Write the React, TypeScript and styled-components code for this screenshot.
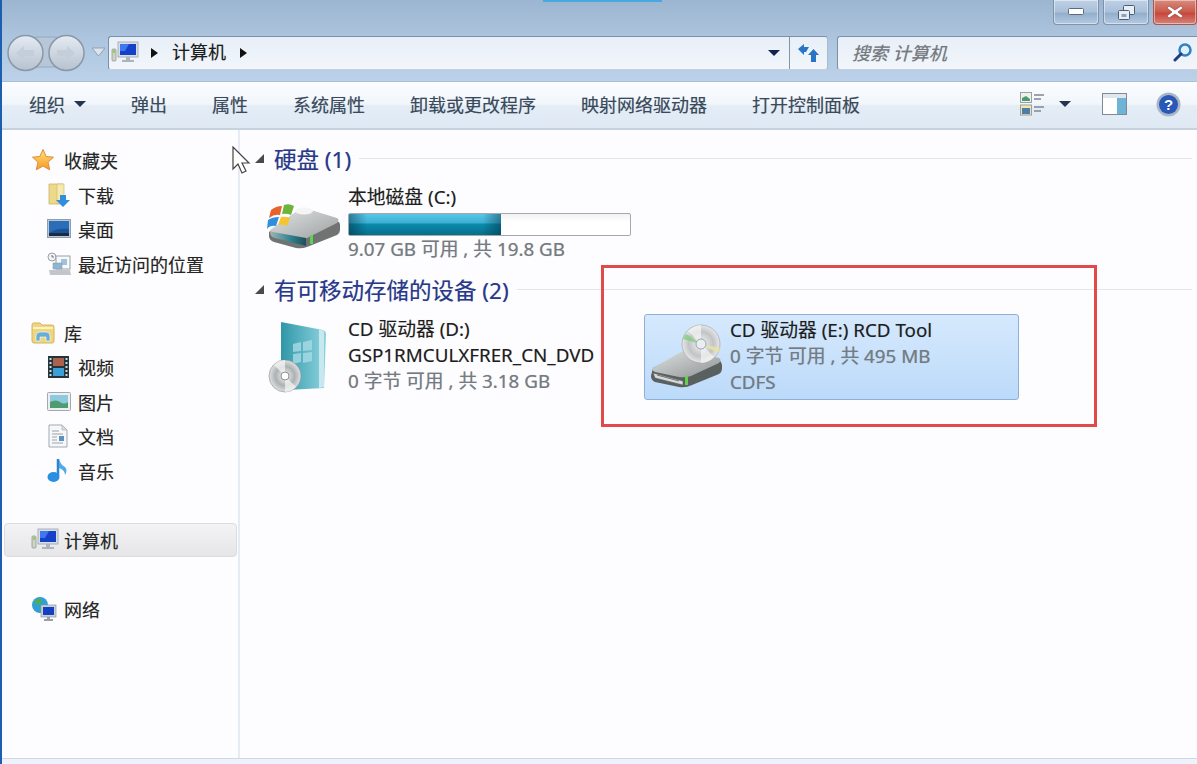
import React from 'react';
import styled, { createGlobalStyle } from 'styled-components';

const GlobalStyle = createGlobalStyle`
    html, body { margin: 0; padding: 0; height: 100%; overflow: hidden; background: #fdfcfe; }
    #root { height: 100%; }
    * { box-sizing: border-box; }
`;

const FONT = `"Noto Sans", "Noto Sans CJK SC", sans-serif`;

const Window = styled.div`
    position: relative;
    display: flex;
    flex-direction: column;
    width: 1197px;
    height: 764px;
    border-left: 2px solid #1d5fae;
    font-family: ${FONT};
    font-size: 18px;
    text-shadow: 0 0 .7px rgba(0, 0, 0, .3);
    background: #fdfcfe;
    overflow: hidden;
`;

const Chrome = styled.div`
    position: relative;
    height: 82px;
    flex: none;
    background: linear-gradient(#9cb5d0 0%, #acc4de 45%, #bcd2ea 100%);
    box-shadow: inset 0 -1px 0 #a9bfd8;
`;

const ActiveStrip = styled.div`
    position: absolute;
    left: 541px;
    top: 0;
    width: 119px;
    height: 2px;
    background: #4aa8e0;
`;

const CaptionRow = styled.div`
    display: flex;
    justify-content: flex-end;
    gap: 4px;
    height: 36px;
`;

const CaptionButton = styled.div<{ $close?: boolean }>`
    display: flex;
    align-items: center;
    justify-content: center;
    width: ${p => (p.$close ? '44px' : '46px')};
    height: 25px;
    border: 1px solid ${p => (p.$close ? '#a8564f' : '#7f93a8')};
    border-top: none;
    border-radius: 0 0 4px 4px;
    background: ${p => p.$close
        ? 'linear-gradient(#d98b7c, #c9594a 50%, #c8453a 55%, #d5847a)'
        : 'linear-gradient(#bed0e4, #a9c0da 50%, #93aecb 55%, #b4cae2)'};
    box-shadow: inset 0 0 0 1px rgba(255, 255, 255, .45);
`;

const AddressRow = styled.div`
    display: flex;
    align-items: center;
    height: 34px;
    padding-left: 5px;
`;

const NavGroup = styled.div`
    width: 101px;
    flex: none;
    display: flex;
`;

const AddressBox = styled.div`
    display: flex;
    align-items: center;
    width: 720px;
    height: 34px;
    flex: none;
    border: 1px solid #7d8fa3;
    border-bottom-color: #c2d0e0;
    border-right-color: #a9bbcf;
    border-radius: 3px;
    background: linear-gradient(#e8eff8, #f2f6fb);
`;

const Crumbs = styled.div`
    flex: 1;
    display: flex;
    align-items: center;
    height: 100%;
    padding-left: 2px;
    color: #1c1c1c;
`;

const CrumbLabel = styled.span`
    margin: 0 14px 4px 14px;
`;

const CrumbArrow = styled.span<{ $left?: number }>`
    display: inline-block;
    margin-left: ${p => p.$left ?? 0}px;
    width: 0;
    height: 0;
    border-top: 5px solid transparent;
    border-bottom: 5px solid transparent;
    border-left: 7px solid #111;
`;

const Caret = styled.span<{ $color?: string; $left?: number }>`
    display: inline-block;
    margin-left: ${p => p.$left ?? 0}px;
    width: 0;
    height: 0;
    border-left: 6px solid transparent;
    border-right: 6px solid transparent;
    border-top: 6px solid ${p => p.$color ?? '#26344f'};
`;

const HistoryCell = styled.div`
    width: 34px;
    height: 100%;
    display: flex;
    align-items: center;
    padding-left: 13px;
`;

const RefreshCell = styled.div`
    width: 38px;
    height: 100%;
    display: flex;
    align-items: center;
    justify-content: center;
    border-left: 1px solid #8494a6;
`;

const SearchBox = styled.div`
    display: flex;
    align-items: center;
    justify-content: space-between;
    margin-left: 9px;
    flex: 1;
    height: 34px;
    padding: 0 4px 2px 14px;
    border: 1px solid #7d8fa3;
    border-bottom-color: #c2d0e0;
    border-right: none;
    border-radius: 3px 0 0 3px;
    background: linear-gradient(#e8eff8, #f2f6fb);
    color: #75797f;
    font-style: italic;
`;

const CommandBar = styled.div`
    display: flex;
    align-items: center;
    flex: none;
    height: 48px;
    padding: 0 16px 2px 27px;
    border-bottom: 2px solid #c7d2df;
    background: linear-gradient(#fbfdff 0%, #f1f6fb 48%, #e4edf6 52%, #dfe9f4 100%);
    color: #3a4a5e;
`;

const CommandList = styled.div`
    display: flex;
    align-items: center;
    gap: 45px;
    flex: 1;
`;

const CommandItem = styled.span`
    display: flex;
    align-items: center;
    white-space: nowrap;
`;

const CommandIcons = styled.div`
    display: flex;
    align-items: center;
`;

const IconSlot = styled.span<{ $left: number }>`
    display: flex;
    margin-left: ${p => p.$left}px;
`;

const Body = styled.div`
    flex: 1;
    display: flex;
    min-height: 0;
`;

const Sidebar = styled.nav`
    width: 238px;
    flex: none;
    display: flex;
    flex-direction: column;
    gap: 34.5px;
    padding: 13px 1px 0 2px;
    border-right: 2px solid #e6ebf5;
    color: #262626;
`;

const NavSection = styled.div`
    display: flex;
    flex-direction: column;
`;

const NavRow = styled.div<{ $child?: boolean; $active?: boolean }>`
    display: flex;
    align-items: center;
    height: 34.5px;
    padding-left: ${p => (p.$child ? '42px' : '26px')};
    white-space: nowrap;
    border-radius: 4px;
    border: 1px solid ${p => (p.$active ? '#dcdcde' : 'transparent')};
    background: ${p => (p.$active ? 'linear-gradient(#f3f2f4, #e6e6e8)' : 'transparent')};
`;

const NavIcon = styled.span<{ $child?: boolean }>`
    display: flex;
    align-items: center;
    flex: none;
    width: ${p => (p.$child ? '31px' : '33px')};
`;

const Content = styled.main`
    flex: 1;
    display: flex;
    flex-direction: column;
    padding: 13px 5px 0 15px;
`;

const GroupHeader = styled.div`
    display: flex;
    align-items: center;
    height: 30px;
    color: #27388f;
    font-size: 22.5px;
    white-space: nowrap;
`;

const GroupArrow = styled.span`
    width: 0;
    height: 0;
    margin-right: 10px;
    border-left: 9px solid transparent;
    border-bottom: 9px solid #4a4a4a;
`;

const GroupLine = styled.span`
    flex: 1;
    height: 1px;
    margin-left: 8px;
    background: #e4e6ea;
`;

const TileGrid = styled.div`
    display: grid;
    grid-template-columns: repeat(2, 375px);
    gap: 7px;
    margin: 9px 0 11px 7px;
`;

const Tile = styled.div<{ $selected?: boolean }>`
    display: flex;
    height: ${p => (p.$selected ? '86px' : 'auto')};
    margin-top: ${p => (p.$selected ? '1px' : '0')};
    border-radius: 3px;
    border: 1px solid ${p => (p.$selected ? '#8fb0d6' : 'transparent')};
    background: ${p => (p.$selected ? 'linear-gradient(#d6e9fd, #bcdafa)' : 'transparent')};
`;

const TileIcon = styled.div`
    width: 85px;
    flex: none;
    display: flex;
    align-items: center;
    padding-left: 4px;
`;

const TileText = styled.div<{ $top?: number }>`
    display: flex;
    flex-direction: column;
    min-width: 0;
    padding-top: ${p => p.$top ?? 2}px;
    font-size: 18.8px;
    line-height: 26px;
    white-space: nowrap;
`;

const TileName = styled.div`
    color: #1e1e1e;
`;

const TileMeta = styled.div`
    color: #757b82;
`;

const SpaceBar = styled.div`
    width: 283px;
    height: 23px;
    margin-top: 3px;
    border: 1px solid #a5a8ad;
    border-radius: 2px;
    background: linear-gradient(#f2f2f2, #fff 40%);
    overflow: hidden;
`;

const SpaceFill = styled.div<{ $used: number }>`
    width: ${p => p.$used}%;
    height: 100%;
    background:
        linear-gradient(90deg, rgba(0, 40, 60, .45), transparent 12%, transparent 88%, rgba(0, 40, 60, .45)),
        linear-gradient(#58c6e6 0%, #3eb0d4 42%, #0a8cab 48%, #066f8c 100%);
`;

const StatusStrip = styled.div`
    flex: none;
    height: 6px;
    border-top: 1px solid #d0d8e6;
    background: #eef3fb;
`;

const Annotation = styled.div`
    position: absolute;
    left: 599px;
    top: 265px;
    width: 496px;
    height: 162px;
    border: 3px solid #e24a4a;
    pointer-events: none;
`;

const Cursor = styled.svg`
    position: absolute;
    left: 229px;
    top: 146px;
`;

const ComputerIcon = () => (
    <svg width="28" height="24" viewBox="0 0 28 24">
        <rect x="1" y="8" width="4" height="12" rx="1" fill="#cfd3c8" stroke="#8a8f86" strokeWidth=".7" />
        <rect x="2" y="9" width="2" height="3" fill="#8fd14f" />
        <rect x="7" y="1" width="20" height="15" fill="#d9dee6" stroke="#9aa3ae" strokeWidth=".8" />
        <rect x="9" y="3" width="16" height="11" fill="#1540c8" />
        <path d="M9 3h9l-4 7H9z" fill="#3f78ee" />
        <path d="M15 16h4v3h-4zM11 19h12v2H11z" fill="#aeb4bb" />
    </svg>
);

const StarIcon = () => (
    <svg width="24" height="24" viewBox="0 0 24 24">
        <defs>
            <linearGradient id="star" x1="0" y1="0" x2="0" y2="1">
                <stop offset="0" stopColor="#ffe27a" />
                <stop offset="1" stopColor="#f79a22" />
            </linearGradient>
        </defs>
        <path d="M12 1.5l3.2 7 7.3.7-5.5 5 1.7 7.6L12 18l-6.700 3.800 1.700-7.600-5.500-5 7.300-.7z" fill="url(#star)" stroke="#e08a3a" strokeWidth="1" />
    </svg>
);

const DownloadIcon = () => (
    <svg width="24" height="26" viewBox="0 0 24 26">
        <path d="M2 2h14v20H2z" fill="#ecd98a" stroke="#c9b569" strokeWidth=".8" />
        <path d="M10 2h7v15l-7 5z" fill="#f6e9ad" stroke="#c9b569" strokeWidth=".6" />
        <path d="M13 13h6v5h4l-7 7-7-7h4z" fill="#2f8fdc" />
    </svg>
);

const DesktopIcon = () => (
    <svg width="24" height="20" viewBox="0 0 24 20">
        <rect x=".5" y=".5" width="23" height="18" fill="#b8c6d8" stroke="#8d9db2" />
        <rect x="2" y="2" width="20" height="15" fill="#16559b" />
        <path d="M2 2h20v8C14 9 8 10 2 14z" fill="#2c6db8" />
        <rect x="2" y="14" width="20" height="3" fill="#1d2b3e" />
    </svg>
);

const RecentIcon = () => (
    <svg width="25" height="24" viewBox="0 0 25 24">
        <circle cx="5" cy="5" r="4" fill="#f3f3f3" stroke="#9aa0a6" />
        <path d="M5 3v2h2" stroke="#6f7680" fill="none" />
        <rect x="9" y="4" width="14" height="13" fill="#f7f9fb" stroke="#9aa0a6" />
        <path d="M14 7h6v6h-6z" fill="#9ec3dd" />
        <rect x="6" y="11" width="9" height="6" fill="#8db6d2" stroke="#8a949c" strokeWidth=".5" />
        <path d="M2 18h21l1 5H3z" fill="#c2c6ca" />
    </svg>
);

const LibraryIcon = () => (
    <svg width="24" height="22" viewBox="0 0 24 22">
        <path d="M1 3q0-2 2-2h6l2 2h10q2 0 2 2v14q0 2-2 2H3q-2 0-2-2z" fill="#f0d57e" stroke="#d2b45f" />
        <path d="M2 6h20" stroke="#fbf3c8" strokeWidth="2" />
        <path d="M5 19v-5q0-4 4-4h6q4 0 4 4v5h-4v-4H9v4z" fill="#67aed8" stroke="#fff" strokeWidth=".6" />
    </svg>
);

const VideoIcon = () => (
    <svg width="23" height="23" viewBox="0 0 23 23">
        <rect width="21" height="22" x="1" fill="#26343a" />
        <path d="M6 2h11v8H6z" fill="#a9634c" />
        <path d="M6 12h11v8H6z" fill="#3d9fd8" />
        <path d="M2.500 2h2v2h-2zm0 4h2v2h-2zm0 4h2v2h-2zm0 4h2v2h-2zm0 4h2v2h-2zM18.500 2h2v2h-2zm0 4h2v2h-2zm0 4h2v2h-2zm0 4h2v2h-2zm0 4h2v2h-2z" fill="#bfe0ea" />
    </svg>
);

const PictureIcon = () => (
    <svg width="24" height="20" viewBox="0 0 24 20">
        <rect x=".5" y=".5" width="23" height="18" rx="1" fill="#eceff2" stroke="#a4a9ae" />
        <rect x="3" y="3" width="18" height="13" fill="#8ec9df" />
        <path d="M3 10q6-3 10 0t8 0v6H3z" fill="#4f9c70" />
    </svg>
);

const DocumentIcon = () => (
    <svg width="22" height="24" viewBox="0 0 22 24">
        <path d="M2 1h13l5 5v17H2z" fill="#f6f7f9" stroke="#a4a9b0" />
        <path d="M15 1v5h5z" fill="#d9dde2" stroke="#a4a9b0" strokeWidth=".6" />
        <path d="M5 7h7M5 10h11M5 13h5M5 16h5M5 19h11" stroke="#9ba4ae" />
        <rect x="12" y="12" width="5" height="5" fill="#5b93bd" />
    </svg>
);

const MusicIcon = () => (
    <svg width="22" height="25" viewBox="0 0 22 25">
        <path d="M11 1v17" stroke="#2a86d2" strokeWidth="2.500" />
        <ellipse cx="6.500" cy="19" rx="6" ry="5" fill="#2a8fe0" />
        <path d="M12 1q1 5 6 8 3 3 0 8 0-5-6-7z" fill="#52a9e8" />
    </svg>
);

const NetworkIcon = () => (
    <svg width="26" height="26" viewBox="0 0 26 26">
        <circle cx="9" cy="9" r="8" fill="#2f9fd6" />
        <path d="M4 4q4-2 7 0l-2 4-4 1zM9 11l5 1-2 4-3-1z" fill="#4fae4a" />
        <rect x="10" y="9" width="15" height="12" fill="#c9d0d8" stroke="#8c97a3" strokeWidth=".7" />
        <rect x="12" y="11" width="11" height="8" fill="#1440c4" />
        <path d="M16 21h3v2h-3zM13 23h9v2h-9z" fill="#98a0a8" />
    </svg>
);

const HardDiskIcon = () => (
    <svg width="74" height="54" viewBox="0 0 74 54">
        <defs>
            <linearGradient id="hddTop" x1="0" y1="0" x2="1" y2="1">
                <stop offset="0" stopColor="#e3e5e5" />
                <stop offset="1" stopColor="#9a9f9f" />
            </linearGradient>
            <linearGradient id="hddFront" x1="0" y1="0" x2="1" y2="0">
                <stop offset="0" stopColor="#9fb4b6" />
                <stop offset=".6" stopColor="#2d7f8c" />
                <stop offset="1" stopColor="#1f4f58" />
            </linearGradient>
        </defs>
        <path d="M2 36 30 18q6-3 14-1l26 8q3 1 3 4v5q0 3-3 5L40 51q-5 2-11 1L7 46q-5-2-5-6z" fill="#6f7473" />
        <path d="M3 34 30 15q6-3 14-1l26 8q3 2 0 5L40 42q-5 2-11 1L6 37q-3-1-3-3z" fill="url(#hddTop)" />
        <ellipse cx="37" cy="15" rx="9" ry="3.500" fill="#f4f5f5" />
        <path d="M3 35q0 6 5 7l31 8v-8L6 36z" fill="url(#hddFront)" />
        <rect x="43" y="39" width="3" height="9" fill="#63d04f" />
        <path d="M4 14q5-4 11-4l-2 9q-6-1-11 3z" fill="#e8632c" />
        <path d="M17 9q5-2 10 1l-3 9q-4-2-9-1z" fill="#6cb53a" />
        <path d="M1 24q4-3 11-3l-3 9q-6-1-9 3z" fill="#2f8fdc" />
        <path d="M14 21q5-1 9 1l-3 8q-4-2-9-1z" fill="#f4c52e" />
    </svg>
);

const DvdBoxIcon = () => (
    <svg width="62" height="74" viewBox="0 0 62 74">
        <defs>
            <linearGradient id="box" x1="0" y1="0" x2="1" y2="0">
                <stop offset="0" stopColor="#2f97a8" />
                <stop offset="1" stopColor="#8ed3df" />
            </linearGradient>
            <radialGradient id="disc">
                <stop offset="0" stopColor="#f5f5f5" />
                <stop offset=".6" stopColor="#aeb1b3" />
                <stop offset="1" stopColor="#dfe1e1" />
            </radialGradient>
        </defs>
        <path d="M14 2l42 8q3 1 3 4l-2 54-38 2q-5-1-5-6z" fill="url(#box)" />
        <path d="M52 9l5 2v56l-5 1z" fill="#c6e8ee" />
        <path d="M26 24l8-2v9l-8 1zM36 22l9-2v10l-9 1zM26 34l8-1v9l-8 2zM36 33l9-1v9l-9 2z" fill="#a8dbe6" opacity=".8" />
        <circle cx="18" cy="56" r="16" fill="url(#disc)" stroke="#8c9092" strokeWidth=".6" />
        <path d="M18 56L7 45q5-5 11-5zM18 56l11 11q-5 5-11 5z" fill="#f4f4f4" opacity=".75" />
        <circle cx="18" cy="56" r="4" fill="#fff" stroke="#8c9092" />
    </svg>
);

const CdDriveIcon = () => (
    <svg width="76" height="66" viewBox="0 0 76 66">
        <defs>
            <radialGradient id="cd">
                <stop offset="0" stopColor="#f6f6f6" />
                <stop offset=".65" stopColor="#c1c4c6" />
                <stop offset="1" stopColor="#e6e7e8" />
            </radialGradient>
            <linearGradient id="drive" x1="0" y1="0" x2="1" y2="1">
                <stop offset="0" stopColor="#e0e2e2" />
                <stop offset="1" stopColor="#8e9393" />
            </linearGradient>
        </defs>
        <path d="M4 44 32 30q6-3 12-1l26 7q3 2 3 5v4q0 3-3 5L43 61q-6 3-13 2L6 58q-4-2-4-6z" fill="#5a5f5f" />
        <path d="M4 44 32 28q6-3 12-1l26 7q3 2 0 5L42 52q-6 2-12 1L6 48q-4-2-2-4z" fill="url(#drive)" />
        <circle cx="52" cy="20" r="19" fill="url(#cd)" stroke="#9a9da0" strokeWidth=".6" />
        <path d="M52 20L34 15q1-3 3-5z" fill="#7fd07a" opacity=".8" />
        <path d="M52 20l19 4-2 5z" fill="#e8e2a0" opacity=".9" />
        <path d="M52 20L39 7q6-6 13-6zM52 20l13 13q-6 6-13 6z" fill="#f5f5f5" opacity=".7" />
        <circle cx="52" cy="20" r="5" fill="#e9eef2" stroke="#9aa6b0" />
        <path d="M4 49l30 8v4L6 54z" fill="#d8dbdb" stroke="#5a5e5e" strokeWidth=".6" />
        <path d="M8 51l22 6" stroke="#6f7474" strokeWidth="1" />
        <rect x="36" y="52" width="3" height="9" fill="#63d04f" />
    </svg>
);

const NavButtons = () => (
    <svg width="101" height="40" viewBox="0 0 101 40">
        <defs>
            <linearGradient id="orb" x1="0" y1="0" x2="0" y2="1">
                <stop offset="0" stopColor="#e4ebf3" />
                <stop offset="1" stopColor="#b6c2cf" />
            </linearGradient>
        </defs>
        <rect x="18" y="4" width="42" height="30" rx="12" fill="#b7c7d8" stroke="#95a8bb" />
        <circle cx="18.500" cy="20" r="17.500" fill="url(#orb)" stroke="#8a97a5" strokeWidth="1.500" />
        <circle cx="59.500" cy="20" r="17.500" fill="url(#orb)" stroke="#8a97a5" strokeWidth="1.500" />
        <path d="M9 20l8-7v4h10v6H17v4z" fill="#c4ced9" />
        <path d="M68 20l-8-7v4H50v6h10v4z" fill="#c4ced9" />
        <path d="M85 15h13l-6.500 8z" fill="#dbe5ef" stroke="#93a3b4" />
    </svg>
);

const RefreshIcon = () => (
    <svg width="22" height="20" viewBox="0 0 22 20">
        <path d="M0 6l6-5v3h5L8 9H6v3z" fill="#2a74c6" />
        <path d="M10 12l5.500-6 5.500 6h-3v7h-5v-7z" fill="#2a74c6" />
    </svg>
);

const SearchIcon = () => (
    <svg width="20" height="20" viewBox="0 0 20 20">
        <circle cx="12" cy="8" r="5.500" fill="#dff0fb" stroke="#2f7fc4" strokeWidth="2.500" />
        <path d="M8 12l-6 6" stroke="#1c3f80" strokeWidth="3" strokeLinecap="round" />
    </svg>
);

const MinimizeGlyph = () => (
    <svg width="16" height="8" viewBox="0 0 16 8">
        <rect x=".5" y=".5" width="15" height="6" rx="1" fill="#fff" stroke="#5b6b7e" />
    </svg>
);

const RestoreGlyph = () => (
    <svg width="17" height="15" viewBox="0 0 17 15">
        <rect x="5.500" y=".5" width="11" height="9" rx="1" fill="#e8eef5" stroke="#4e5d6e" />
        <rect x=".5" y="5.500" width="11" height="9" rx="1" fill="#e8eef5" stroke="#4e5d6e" />
        <rect x="3.500" y="9" width="5" height="3" fill="#8ea2b8" />
    </svg>
);

const CloseGlyph = () => (
    <svg width="18" height="14" viewBox="0 0 18 14">
        <path d="M3 1l6 4 6-4 2 2-5 4 5 4-2 2-6-4-6 4-2-2 5-4-5-4z" fill="#fff" stroke="#8a3d36" strokeWidth=".6" />
    </svg>
);

const ViewsIcon = () => (
    <svg width="26" height="24" viewBox="0 0 26 24">
        <rect x=".5" y=".5" width="11" height="10" fill="#eef3e8" stroke="#9aa0a6" />
        <path d="M2 6l4-2 4 3v2H2z" fill="#4b9a72" />
        <rect x=".5" y="13" width="11" height="10" fill="#f3e7a6" stroke="#9aa0a6" />
        <path d="M2 16h8v6H2z" fill="#4d7ea8" />
        <path d="M14 3h10M14 7h7M14 15h10M14 19h7" stroke="#7c8894" strokeWidth="1.300" />
    </svg>
);

const PaneIcon = () => (
    <svg width="25" height="22" viewBox="0 0 25 22">
        <rect x=".5" y=".5" width="24" height="21" fill="#fff" stroke="#7f8a96" />
        <rect x="1" y="1" width="23" height="4" fill="#dfe6ec" />
        <rect x="15" y="5" width="9" height="16" fill="#6fb4d6" />
    </svg>
);

const HelpIcon = () => (
    <svg width="25" height="25" viewBox="0 0 25 25">
        <circle cx="12.500" cy="12.500" r="12" fill="#a9b6c8" />
        <circle cx="12.500" cy="12.500" r="9.500" fill="#2858b8" />
        <text x="12.500" y="18" textAnchor="middle" fontSize="15" fontWeight="700" fontFamily="Liberation Sans, sans-serif" fill="#fff">?</text>
    </svg>
);

const COMMANDS = ['弹出', '属性', '系统属性', '卸载或更改程序', '映射网络驱动器', '打开控制面板'];

const App: React.FC = () => {
    return (
        <Window>
            <GlobalStyle />
            <Chrome>
                <ActiveStrip />
                <CaptionRow>
                    <CaptionButton><MinimizeGlyph /></CaptionButton>
                    <CaptionButton><RestoreGlyph /></CaptionButton>
                    <CaptionButton $close><CloseGlyph /></CaptionButton>
                </CaptionRow>
                <AddressRow>
                    <NavGroup><NavButtons /></NavGroup>
                    <AddressBox>
                        <Crumbs>
                            <ComputerIcon />
                            <CrumbArrow $left={12} />
                            <CrumbLabel>计算机</CrumbLabel>
                            <CrumbArrow />
                        </Crumbs>
                        <HistoryCell><Caret $color="#14234f" /></HistoryCell>
                        <RefreshCell><RefreshIcon /></RefreshCell>
                    </AddressBox>
                    <SearchBox>
                        搜索 计算机
                        <SearchIcon />
                    </SearchBox>
                </AddressRow>
            </Chrome>
            <CommandBar>
                <CommandList>
                    <CommandItem>组织<Caret $left={9} /></CommandItem>
                    {COMMANDS.map(label => <CommandItem key={label}>{label}</CommandItem>)}
                </CommandList>
                <CommandIcons>
                    <ViewsIcon />
                    <Caret $left={13} />
                    <IconSlot $left={31}><PaneIcon /></IconSlot>
                    <IconSlot $left={29}><HelpIcon /></IconSlot>
                </CommandIcons>
            </CommandBar>
            <Body>
                <Sidebar>
                    <NavSection>
                        <NavRow><NavIcon><StarIcon /></NavIcon>收藏夹</NavRow>
                        <NavRow $child><NavIcon $child><DownloadIcon /></NavIcon>下载</NavRow>
                        <NavRow $child><NavIcon $child><DesktopIcon /></NavIcon>桌面</NavRow>
                        <NavRow $child><NavIcon $child><RecentIcon /></NavIcon>最近访问的位置</NavRow>
                    </NavSection>
                    <NavSection>
                        <NavRow><NavIcon><LibraryIcon /></NavIcon>库</NavRow>
                        <NavRow $child><NavIcon $child><VideoIcon /></NavIcon>视频</NavRow>
                        <NavRow $child><NavIcon $child><PictureIcon /></NavIcon>图片</NavRow>
                        <NavRow $child><NavIcon $child><DocumentIcon /></NavIcon>文档</NavRow>
                        <NavRow $child><NavIcon $child><MusicIcon /></NavIcon>音乐</NavRow>
                    </NavSection>
                    <NavSection>
                        <NavRow $active><NavIcon><ComputerIcon /></NavIcon>计算机</NavRow>
                    </NavSection>
                    <NavSection>
                        <NavRow><NavIcon><NetworkIcon /></NavIcon>网络</NavRow>
                    </NavSection>
                </Sidebar>
                <Content>
                    <GroupHeader>
                        <GroupArrow />硬盘 (1)<GroupLine />
                    </GroupHeader>
                    <TileGrid>
                        <Tile>
                            <TileIcon><HardDiskIcon /></TileIcon>
                            <TileText $top={1}>
                                <TileName>本地磁盘 (C:)</TileName>
                                <SpaceBar><SpaceFill $used={54} /></SpaceBar>
                                <TileMeta>9.07 GB 可用 , 共 19.8 GB</TileMeta>
                            </TileText>
                        </Tile>
                    </TileGrid>
                    <GroupHeader>
                        <GroupArrow />有可移动存储的设备 (2)<GroupLine />
                    </GroupHeader>
                    <TileGrid>
                        <Tile>
                            <TileIcon><DvdBoxIcon /></TileIcon>
                            <TileText>
                                <TileName>CD 驱动器 (D:)</TileName>
                                <TileName>GSP1RMCULXFRER_CN_DVD</TileName>
                                <TileMeta>0 字节 可用 , 共 3.18 GB</TileMeta>
                            </TileText>
                        </Tile>
                        <Tile $selected>
                            <TileIcon><CdDriveIcon /></TileIcon>
                            <TileText>
                                <TileName>CD 驱动器 (E:) RCD Tool</TileName>
                                <TileMeta>0 字节 可用 , 共 495 MB</TileMeta>
                                <TileMeta>CDFS</TileMeta>
                            </TileText>
                        </Tile>
                    </TileGrid>
                </Content>
            </Body>
            <StatusStrip />
            <Annotation />
            <Cursor width="20" height="30" viewBox="0 0 20 30">
                <path d="M2 1v22l5-5 4 9 4-2-4-8h7z" fill="#fff" stroke="#444" strokeWidth="1.200" />
            </Cursor>
        </Window>
    );
};

export default App;
